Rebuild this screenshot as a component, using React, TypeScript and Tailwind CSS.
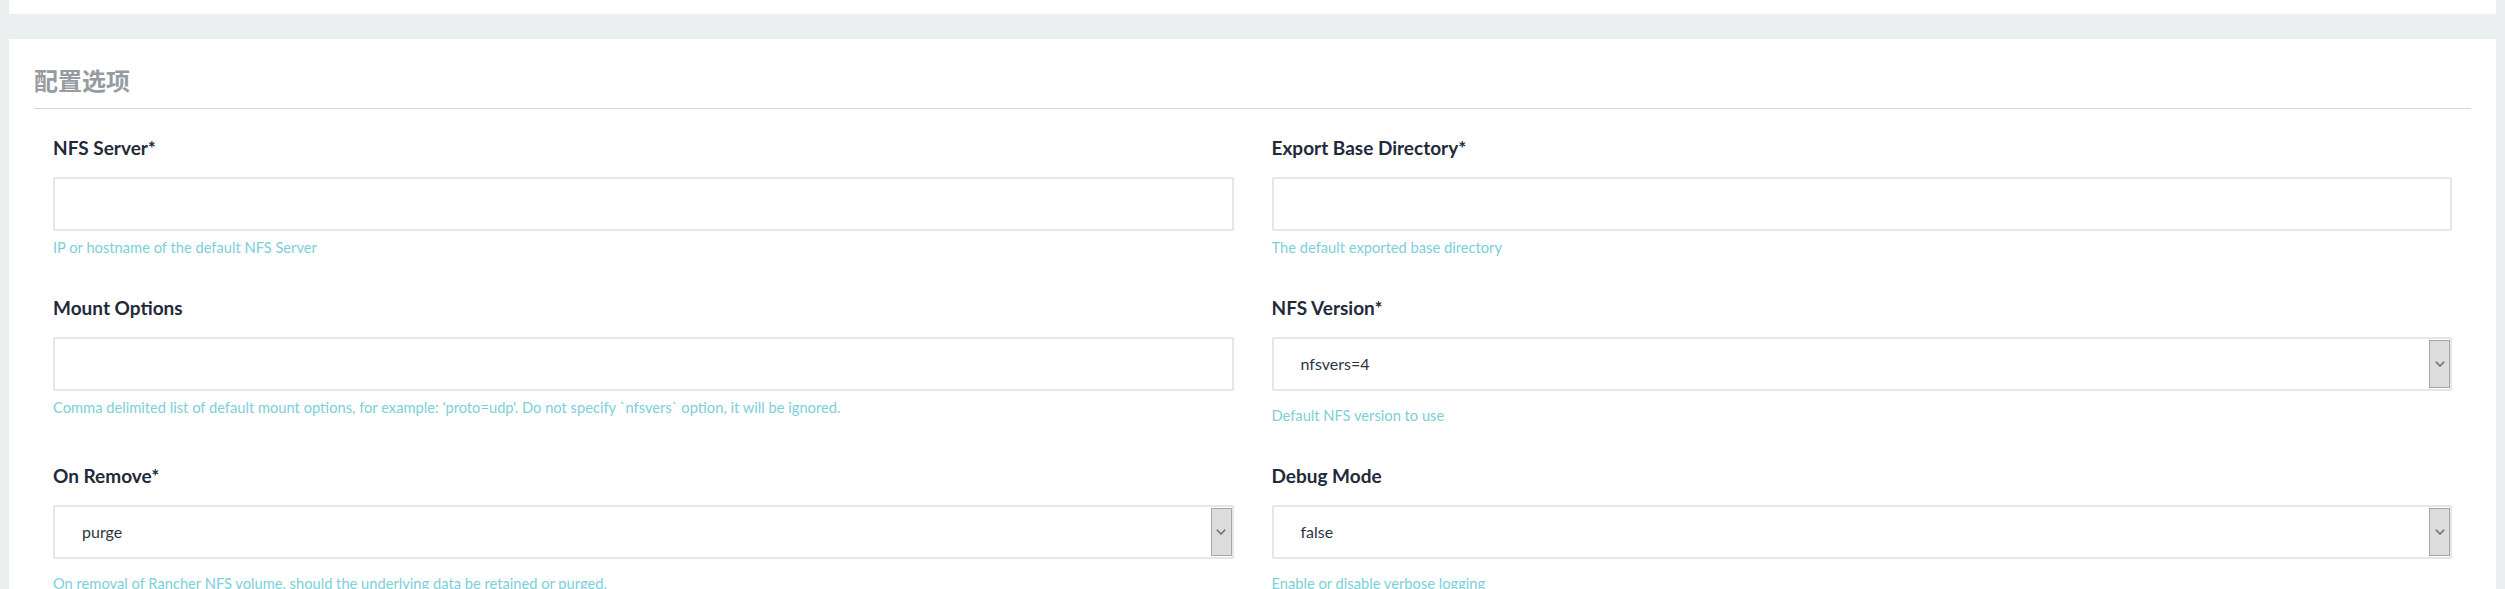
type Field = {
  label: string;
  help: string;
  value?: string;
  select?: boolean;
};

const rows: [Field, Field][] = [
  [
    { label: "NFS Server*", help: "IP or hostname of the default NFS Server" },
    { label: "Export Base Directory*", help: "The default exported base directory" },
  ],
  [
    {
      label: "Mount Options",
      help: "Comma delimited list of default mount options, for example: 'proto=udp'. Do not specify `nfsvers` option, it will be ignored.",
    },
    { label: "NFS Version*", help: "Default NFS version to use", value: "nfsvers=4", select: true },
  ],
  [
    {
      label: "On Remove*",
      help: "On removal of Rancher NFS volume, should the underlying data be retained or purged.",
      value: "purge",
      select: true,
    },
    { label: "Debug Mode", help: "Enable or disable verbose logging", value: "false", select: true },
  ],
];

function FormField({ field }: { field: Field }) {
  return (
    <div className="flex flex-col">
      <label className="text-[19px] leading-[24px] font-bold text-[#1f2a3a] mb-[17px]">{field.label}</label>

      {field.select ? (
        <div className="h-[54px] flex items-stretch bg-white border-2 border-[#e3e7e8] rounded-[2px]">
          <span className="flex-1 flex items-center pl-[27px] text-[16px] text-[#2d3440]">{field.value}</span>
          {/* native-looking dropdown button */}
          <span className="w-[21px] my-[1px] flex items-center justify-center bg-[#dcdcdc] border border-[#a6a6a6]">
            <svg width="10" height="6" viewBox="0 0 10 6" fill="none">
              <path d="M0.8 0.8 L5 5 L9.2 0.8" stroke="#666" strokeWidth="1.4" />
            </svg>
          </span>
        </div>
      ) : (
        <div className="h-[54px] bg-white border-2 border-[#e3e7e8] rounded-[2px]" />
      )}

      <p
        className={`text-[14.7px] leading-[20px] text-[#7ccfd8] ${field.select ? "mt-[14px]" : "mt-[6px]"}`}
      >
        {field.help}
      </p>
    </div>
  );
}

export default function App() {
  return (
    <div
      className="min-h-screen bg-[#ebeff0] px-[9px]"
      style={{ fontFamily: "Lato, 'Noto Sans CJK SC', 'Liberation Sans', sans-serif" }}
    >
      {/* bottom edge of the card above */}
      <div className="h-[14px] bg-white" />

      <div className="mt-[25px] bg-white px-[25px] pt-[30px] pb-[40px]">
        <h2 className="text-[24px] leading-[24px] font-bold text-[#969ca1] pb-[15px] border-b border-[#d2d6d8]">
          配置选项
        </h2>

        <div className="grid grid-cols-2 gap-x-[38px] gap-y-[39px] px-[19px] pt-[27px]">
          {rows.map(([left, right]) => (
            <>
              <FormField key={left.label} field={left} />
              <FormField key={right.label} field={right} />
            </>
          ))}
        </div>
      </div>
    </div>
  );
}
